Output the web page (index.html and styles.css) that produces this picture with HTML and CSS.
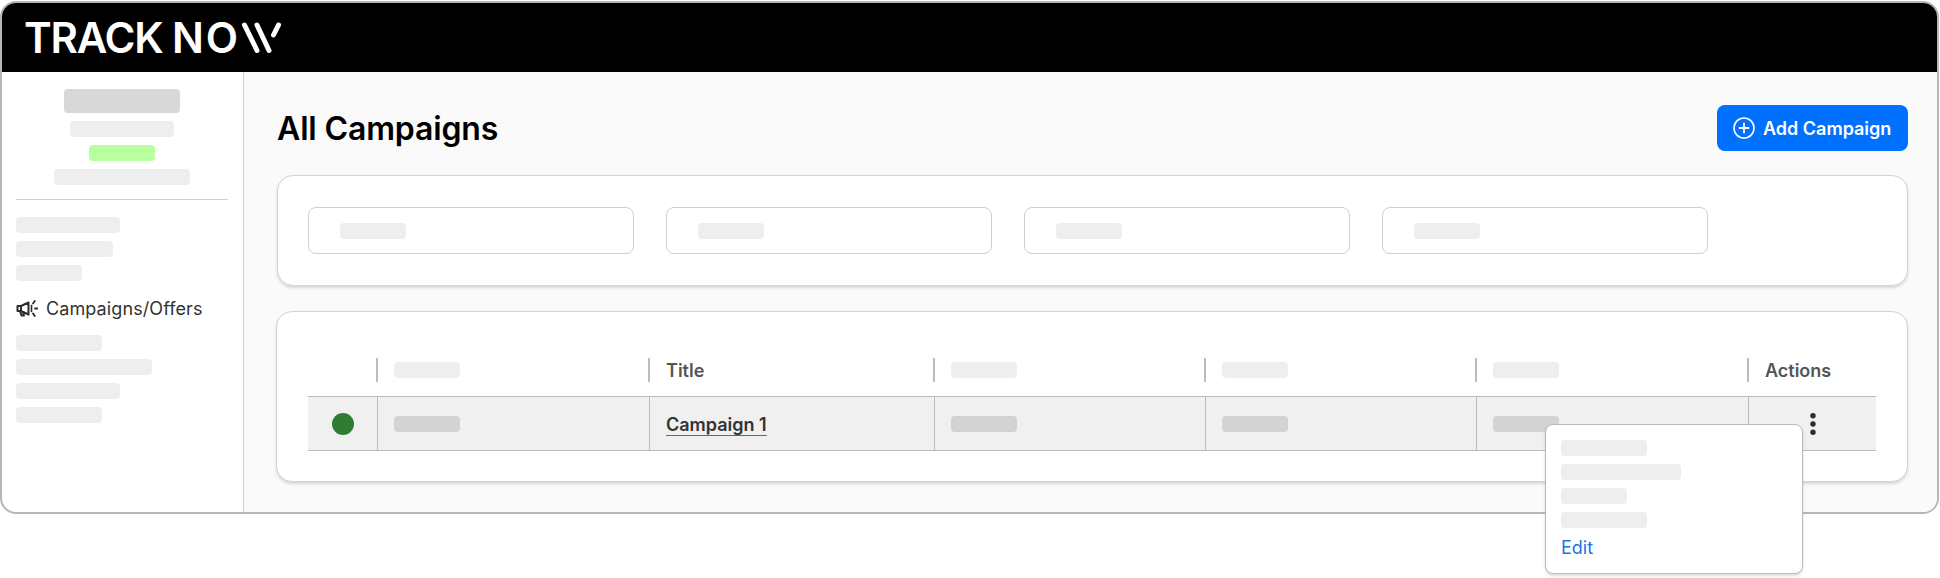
FILE: index.html
```html
<!DOCTYPE html>
<html lang="en">
<head>
    <meta charset="UTF-8">
    <meta name="viewport" content="width=device-width, initial-scale=1.0">
    <title>All Campaigns</title>
    <link rel="stylesheet" href="styles.css">
</head>
<body>

    <div class="window">
        <header class="topbar">
            <span class="logo-text">TRACK <span class="logo-now">NO</span></span>
            <svg class="logo-mark" width="44" height="32" viewBox="0 0 44 32" aria-label="W">
                <path d="M4.5 3 L17 28.5 M17 3 L29 28.5 M38.5 3 L33.5 13" fill="none" stroke="#fff" stroke-width="5" stroke-linecap="round"/>
            </svg>
        </header>

        <div class="layout">
            <aside class="sidebar">
                <div class="profile">
                    <div class="skel skel-dark profile-name"></div>
                    <div class="skel w-104"></div>
                    <div class="skel skel-green w-66"></div>
                    <div class="skel w-136"></div>
                </div>
                <div class="divider"></div>
                <div class="nav-group">
                    <div class="skel w-104"></div>
                    <div class="skel w-97"></div>
                    <div class="skel w-66"></div>
                </div>
                <div class="nav-item">
                    <!-- megaphone -->
                    <svg width="22" height="20" viewBox="0 0 22 20">
                        <path d="M1.5 7 L1.5 12 L5 12 L12.5 15.5 L12.5 3.5 L5 7 Z M5 7 L5 12 M4 12 L5.5 16.5 L8 16.5 L7 13.2" fill="none" stroke="#2b2b2b" stroke-width="2" stroke-linejoin="round"/>
                        <path d="M15.5 6.5 V12.5" stroke="#2b2b2b" stroke-width="1.6" stroke-linecap="round"/>
                        <path d="M17 4.5 L18.8 2 M19 9.5 H21.5 M17 14.5 L18.8 17" stroke="#2b2b2b" stroke-width="1.8" stroke-linecap="round"/>
                    </svg>
                    <span>Campaigns/Offers</span>
                </div>
                <div class="nav-group">
                    <div class="skel w-86"></div>
                    <div class="skel w-136"></div>
                    <div class="skel w-104"></div>
                    <div class="skel w-86"></div>
                </div>
            </aside>

            <main class="content">
                <div class="page-head">
                    <h1>All Campaigns</h1>
                    <button class="add-btn">
                        <svg width="22" height="22" viewBox="0 0 22 22">
                            <circle cx="11" cy="11" r="10" fill="none" stroke="#fff" stroke-width="1.6"/>
                            <path d="M11 6.5 V15.5 M6.5 11 H15.5" stroke="#fff" stroke-width="1.8" stroke-linecap="round"/>
                        </svg>
                        Add Campaign
                    </button>
                </div>

                <section class="card filters">
                    <div class="filter"><div class="skel w-66"></div></div>
                    <div class="filter"><div class="skel w-66"></div></div>
                    <div class="filter"><div class="skel w-66"></div></div>
                    <div class="filter"><div class="skel w-66"></div></div>
                </section>

                <section class="card table-card">
                    <table class="campaigns">
                        <colgroup>
                            <col class="col-status">
                            <col class="col-wide">
                            <col class="col-title">
                            <col class="col-mid">
                            <col class="col-mid">
                            <col class="col-wide">
                            <col class="col-actions">
                        </colgroup>
                        <thead>
                            <tr>
                                <th></th>
                                <th><div class="th-in"><div class="skel w-66"></div></div></th>
                                <th><div class="th-in">Title</div></th>
                                <th><div class="th-in"><div class="skel w-66"></div></div></th>
                                <th><div class="th-in"><div class="skel w-66"></div></div></th>
                                <th><div class="th-in"><div class="skel w-66"></div></div></th>
                                <th><div class="th-in">Actions</div></th>
                            </tr>
                        </thead>
                        <tbody>
                            <tr>
                                <td class="status-cell"><span class="status-dot"></span></td>
                                <td><div class="skel skel-row w-66"></div></td>
                                <td class="title-cell"><a class="campaign-link" href="#">Campaign 1</a></td>
                                <td><div class="skel skel-row w-66"></div></td>
                                <td><div class="skel skel-row w-66"></div></td>
                                <td><div class="skel skel-row w-66"></div></td>
                                <td class="actions-cell">
                                    <svg class="kebab" width="8" height="24" viewBox="0 0 8 24">
                                        <circle cx="4" cy="3.7" r="2.7"/>
                                        <circle cx="4" cy="12" r="2.7"/>
                                        <circle cx="4" cy="20.3" r="2.7"/>
                                    </svg>
                                    <div class="row-menu">
                                        <div class="skel w-86"></div>
                                        <div class="skel w-120"></div>
                                        <div class="skel w-66"></div>
                                        <div class="skel w-86"></div>
                                        <a class="menu-link" href="#">Edit</a>
                                    </div>
                                </td>
                            </tr>
                        </tbody>
                    </table>
                </section>
            </main>
        </div>
    </div>

</body>
</html>
```

FILE: styles.css
```css
* {
    box-sizing: border-box;
}
html {
    height: 100%;
}
body {
    font-family: 'Inter', 'Liberation Sans', sans-serif;
    background: #fff;
    margin: 0;
    padding: 1px 1px 0 0;
    min-height: 100%;
    color: #333;
}
.window {
    height: 513px;
    border: 2px solid #b6b6b6;
    border-radius: 16px;
    display: flex;
    flex-direction: column;
    background: #fff;
}
.topbar {
    height: 69px;
    flex: none;
    background: #000;
    border-radius: 14px 14px 0 0;
    padding-left: 22px;
    display: flex;
    align-items: center;
    color: #fff;
}
.logo-text {
    font-size: 42px;
    font-weight: 600;
    line-height: 1;
    letter-spacing: -1.2px;
}
.logo-now {
    letter-spacing: 2px;
}
.logo-mark {
    margin-left: 0;
}
.layout {
    flex: 1;
    display: flex;
    min-height: 0;
}

/* sidebar */
.sidebar {
    width: 242px;
    flex: none;
    border-right: 1px solid #cfcfcf;
    padding: 17px 15px 0 14px;
    border-bottom-left-radius: 14px;
}
.profile {
    display: flex;
    flex-direction: column;
    align-items: center;
    gap: 8px;
}
.divider {
    height: 1px;
    background: #d2d2d2;
    margin: 14px 0 17px;
}
.nav-group {
    display: flex;
    flex-direction: column;
    gap: 8px;
}
.nav-item {
    display: flex;
    align-items: center;
    gap: 8px;
    height: 22px;
    padding-top: 2px;
    margin: 16px 0;
    font-size: 18px;
    line-height: 22px;
    letter-spacing: 0.1px;
    color: #333;
}

/* placeholders */
.skel {
    height: 16px;
    border-radius: 4px;
    background: #eeeeee;
}
.skel-dark {
    background: #d8d8d8;
}
.skel-green {
    background: #b8ff9f;
}
.skel-row {
    background: #d3d3d3;
}
.profile-name {
    width: 116px;
    height: 24px;
}
.w-66 { width: 66px; }
.w-86 { width: 86px; }
.w-97 { width: 97px; }
.w-104 { width: 104px; }
.w-120 { width: 120px; }
.w-136 { width: 136px; }

/* main */
.content {
    flex: 1;
    min-width: 0;
    background: #fafafa;
    padding: 33px 29px 0 33px;
    border-bottom-right-radius: 14px;
}
.page-head {
    display: flex;
    justify-content: space-between;
    align-items: center;
    height: 46px;
    margin-bottom: 24px;
}
h1 {
    margin: 0;
    font-size: 32px;
    font-weight: 600;
    letter-spacing: -0.15px;
    color: #000;
}
.add-btn {
    width: 191px;
    height: 46px;
    display: flex;
    align-items: center;
    gap: 8px;
    padding: 0 0 0 16px;
    border: none;
    border-radius: 8px;
    background: #0070ff;
    color: #fff;
    font-family: inherit;
    font-size: 18px;
    font-weight: 600;
}
.card {
    background: #fff;
    border: 1px solid #d4d4d4;
    border-radius: 16px;
    box-shadow: 0 2px 3px rgba(0, 0, 0, 0.14);
    padding: 31px 30px;
}
.filters {
    display: flex;
    gap: 32px;
    height: 111px;
    margin-bottom: 25px;
}
.filter {
    width: 326px;
    height: 47px;
    border: 1px solid #cfcfcf;
    border-radius: 8px;
    padding: 15px 31px;
}
.table-card {
    height: 171px;
    padding: 32px 31px 0 31px;
    margin-left: -1px;
}

/* table */
.campaigns {
    width: 1568px;
    table-layout: fixed;
    border-collapse: separate;
    border-spacing: 0;
}
.col-status { width: 69px; }
.col-wide { width: 272px; }
.col-title { width: 285px; }
.col-mid { width: 271px; }
.col-actions { width: 128px; }
.campaigns th {
    height: 52px;
    padding: 0;
    text-align: left;
    font-size: 18px;
    font-weight: 600;
    color: #555;
}
.th-in {
    height: 24px;
    margin-left: -1px;
    padding-left: 16px;
    border-left: 2px solid #bbb;
    display: flex;
    align-items: center;
}
.campaigns td {
    height: 55px;
    padding: 0 0 0 16px;
    background: #f0f0f0;
    border-top: 1px solid #bbb;
    border-bottom: 1px solid #bbb;
    border-left: 1px solid #bbb;
}
.campaigns td.status-cell {
    border-left: none;
    padding: 0;
    text-align: center;
}
.status-dot {
    display: block;
    width: 22px;
    height: 22px;
    margin: 0 auto;
    border-radius: 50%;
    background: #2e7d32;
}
.campaigns td.title-cell {
    padding-top: 2px;
}
.campaign-link {
    font-size: 18px;
    font-weight: 600;
    color: #333;
    text-decoration-color: #666;
    text-decoration-thickness: 1px;
    text-underline-offset: 4px;
}
.campaigns td.actions-cell {
    position: relative;
    padding: 0;
    text-align: center;
}
.kebab {
    display: block;
    margin: 0 auto;
    fill: #2b2b2b;
}
.row-menu {
    position: absolute;
    left: -204px;
    top: 27px;
    width: 258px;
    height: 150px;
    padding: 15px;
    display: flex;
    flex-direction: column;
    gap: 8px;
    text-align: left;
    background: #fff;
    border: 1px solid #bbb;
    border-radius: 8px;
    box-shadow: 0 2px 3px rgba(0, 0, 0, 0.14);
}
.menu-link {
    margin-top: 2px;
    font-size: 18px;
    line-height: 20px;
    color: #1a73e8;
    text-decoration: none;
}
```
